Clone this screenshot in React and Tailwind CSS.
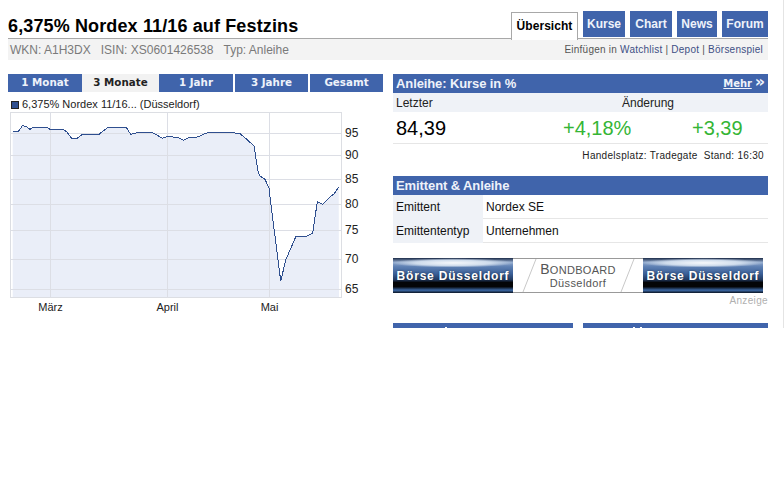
// App.jsx - Anleihe Übersicht
const SANS = 'font-["Liberation_Sans",Arial,sans-serif]';

const TABS = [
  { label: 'Kurse', width: 'w-[42px]' },
  { label: 'Chart', width: 'w-[42px]' },
  { label: 'News', width: 'w-[40px]' },
  { label: 'Forum', width: 'w-[46px]' },
];

// Kurve in Pixeln des Charts
const CURVE = [
  [38, 62], [55, 62], [68, 43], [80, 48], [90, 55], [100, 48], [140, 48], [150, 55], [188, 55], [200, 62],
  [215, 82], [232, 82], [247, 70], [297, 70], [325, 48], [378, 48], [392, 70], [415, 64], [455, 64], [488, 82],
  [502, 76], [535, 80], [550, 88], [568, 79], [590, 79], [625, 64], [688, 64], [720, 68], [740, 85], [762, 105],
  [775, 185], [780, 195], [795, 205], [807, 232], [815, 300], [825, 375], [842, 510], [858, 445], [888, 376],
  [920, 376], [938, 367], [952, 272], [968, 280], [990, 258], [1003, 248], [1016, 228],
].map(([x, y]) => [x / 3, y / 3]);

const Y_GRID = [
  { label: '95', y: 22 },
  { label: '90', y: 44 },
  { label: '85', y: 68 },
  { label: '80', y: 93 },
  { label: '75', y: 119 },
  { label: '70', y: 148 },
  { label: '65', y: 178 },
];

const X_GRID = [
  { label: 'März', x: 50 },
  { label: 'April', x: 167 },
  { label: 'Mai', x: 269 },
];

function Chart() {
  const line = CURVE.map(([x, y]) => `${x.toFixed(1)},${y.toFixed(1)}`).join(' ');
  const area = `12.7,186.5 ${line} 339,186.5`;
  const font = { fontFamily: '"Liberation Sans", Arial, sans-serif' };

  return (
    <svg width="360" height="206" viewBox="0 0 360 206" className="block -ml-2">
      <polygon points={area} fill="#eaeef8" />
      <rect x="10.5" y="1.5" width="331" height="185" fill="none" stroke="#dcdee3" strokeWidth="1" />
      {Y_GRID.map(g => (
        <g key={g.label}>
          <line x1="10" x2="342" y1={g.y + 0.5} y2={g.y + 0.5} stroke="#dcdee5" />
          <text x="345" y={g.y + 4} fontSize="12" fill="#222" style={font}>{g.label}</text>
        </g>
      ))}
      {X_GRID.map(g => (
        <g key={g.label}>
          <line x1={g.x + 0.5} x2={g.x + 0.5} y1="1" y2="187" stroke="#dcdee5" />
          <text x={g.x + 0.5} y="200" fontSize="11" fill="#222" textAnchor="middle" style={font}>{g.label}</text>
        </g>
      ))}
      <polyline points={line} fill="none" stroke="#2f4f8f" strokeWidth="1" shapeRendering="crispEdges" />
    </svg>
  );
}

function BoerseBanner() {
  return (
    <div className="w-[120px] h-[35px] pt-[1px] flex items-center justify-center bg-[radial-gradient(ellipse_52%_13%_at_50%_14%,#f6f8fb_0%,#cfdcec_60%,transparent_100%),linear-gradient(180deg,#1c2b47_0%,#8fa8cc_12%,#5e80b3_25%,#3b6098_45%,#223a60_62%,#040507_70%,#040507_82%,#3c68a5_92%,#0a1422_100%)]">
      <span className={`${SANS} text-[12px] leading-none font-bold text-white tracking-[0.8px] [text-shadow:0_0_2px_#00000080]`}>
        Börse Düsseldorf
      </span>
    </div>
  );
}

function SectionHead({ children }) {
  return (
    <div className="h-[19px] bg-[#4064ab] pl-[3px] flex items-center justify-between text-[13px] tracking-[-0.1px] font-bold text-[#eef2fa]">
      {children}
    </div>
  );
}

function App() {
  return (
    <div className={`${SANS} w-[784px] h-[328px] overflow-hidden bg-white border-r border-[#e4e4e4] text-black`}>
      <div className="pl-2 pr-[15px]">
        {/* Titel und Reiter */}
        <div className="h-[39px] flex items-end justify-between border-b-[1.5px] border-[#a8a8a8]">
          <h1 className="text-[18px] leading-[22px] font-bold mb-[1px] tracking-[0.13px]">6,375% Nordex 11/16 auf Festzins</h1>
          <div className="flex items-end gap-[5px] text-[12px] font-bold">
            <div className="w-[67px] h-[28px] -mb-[1.5px] bg-white border-[1.5px] border-b-0 border-[#a8a8a8] flex items-center justify-center tracking-[0.05px]">
              Übersicht
            </div>
            {TABS.map(tab => (
              <div key={tab.label} className={`${tab.width} h-[26px] mb-px bg-[#4064ab] text-[#eef2fa] flex items-center justify-center`}>
                {tab.label}
              </div>
            ))}
          </div>
        </div>

        <div className="h-[21px] bg-[#f3f3f3] pl-[2px] pr-[5px] flex items-center justify-between">
          <div className="flex gap-[10px] text-[12px] text-[#7a7a7a]">
            <span>WKN: A1H3DX</span>
            <span>ISIN: XS0601426538</span>
            <span>Typ: Anleihe</span>
          </div>
          <div className="text-[10px] text-[#555] tracking-[0.24px]">
            Einfügen in <span className="text-[#3d4f84]">Watchlist</span> | <span className="text-[#3d4f84]">Depot</span> | <span className="text-[#3d4f84]">Börsenspiel</span>
          </div>
        </div>

        <div className="mt-[14px] flex gap-[10px]">
          {/* Linke Spalte */}
          <div className="w-[375px]">
            <div className="h-[18px] flex text-[10.3px] font-['DejaVu_Sans',Verdana,sans-serif] font-bold text-[#eef2fa]">
              <div className="w-[74px] bg-[#4064ab] flex items-center justify-center">1 Monat</div>
              <div className="w-[77px] bg-[#f2f2f2] text-[#222] flex items-center justify-center">3 Monate</div>
              <div className="w-[74px] bg-[#4064ab] flex items-center justify-center">1 Jahr</div>
              <div className="w-[73px] ml-[2px] bg-[#4064ab] flex items-center justify-center">3 Jahre</div>
              <div className="w-[73px] ml-[2px] bg-[#4064ab] flex items-center justify-center">Gesamt</div>
            </div>
            <div className="h-[19px] pt-[6px] pl-[3px] flex items-center gap-[3px] text-[11px] text-[#222]">
              <span className="w-[8px] h-[8px] bg-[#2f4f8f] border border-[#222]" />
              6,375% Nordex 11/16... (Düsseldorf)
            </div>
            <Chart />
          </div>

          {/* Rechte Spalte */}
          <div className="w-[375px]">
            <SectionHead>
              <span>Anleihe: Kurse in %</span>
              <span className="pr-[3px] flex items-center gap-[3px] font-['DejaVu_Sans',Verdana,sans-serif] text-[10px]">
                <span className="underline">Mehr</span>
                <span className="text-[16px] leading-none -mt-[3px]">»</span>
              </span>
            </SectionHead>
            <div className="h-[19px] bg-[#eff2f7] pl-[3px] flex items-center text-[12px] text-[#222]">
              <span className="w-[226px]">Letzter</span>
              <span>Änderung</span>
            </div>
            <div className="h-[32px] pl-[3px] flex items-center text-[20px] border-b border-[#e6e6e6]">
              <span className="w-[167px]">84,39</span>
              <span className="w-[129px] text-[#35b535]">+4,18%</span>
              <span className="text-[#35b535]">+3,39</span>
            </div>
            <div className="h-[22px] pr-[4px] flex items-center justify-end gap-[6px] text-[10px] text-[#222] tracking-[0.3px]">
              <span>Handelsplatz: Tradegate</span>
              <span>Stand: 16:30</span>
            </div>

            <div className="mt-[10px]">
              <SectionHead>Emittent &amp; Anleihe</SectionHead>
              <div className="flex h-[24px] text-[12px] text-[#111]">
                <div className="w-[90px] bg-[#eff2f7] pl-[3px] flex items-center">Emittent</div>
                <div className="flex-1 pl-[3px] flex items-center border-b border-[#e6e6e6]">Nordex SE</div>
              </div>
              <div className="flex h-[24px] text-[12px] text-[#111]">
                <div className="w-[90px] bg-[#eff2f7] pl-[3px] flex items-center">Emittententyp</div>
                <div className="flex-1 pl-[3px] flex items-center border-b border-[#e6e6e6]">Unternehmen</div>
              </div>
            </div>

            {/* Werbebanner */}
            <div className="mt-[15px] flex h-[35px]">
              <BoerseBanner />
              <div className="relative w-[130px] bg-white border-y border-[#999] flex flex-col items-center justify-center text-[#555]">
                <svg width="130" height="33" viewBox="0 0 130 33" className="absolute left-0 top-0">
                  <line x1="10" y1="33" x2="23" y2="0" stroke="#c8c8c8" />
                  <line x1="108" y1="33" x2="121" y2="0" stroke="#c8c8c8" />
                </svg>
                <span className="leading-[13px] text-[11px] tracking-[0.3px]"><span className="text-[14px]">B</span>ONDBOARD</span>
                <span className="leading-[12px] text-[11px] tracking-[0.4px]">Düsseldorf</span>
              </div>
              <BoerseBanner />
            </div>
            <div className="h-[15px] pt-[1px] text-right text-[10px] leading-[14px] text-[#b0b0b0] tracking-[0.35px]">Anzeige</div>

            {/* Untere Kästen, vom Bildrand abgeschnitten */}
            <div className="mt-[15px] flex gap-[10px]">
              <div className="w-[180px] h-[5px] bg-[#4064ab] pl-[52px]">
                <div className="w-[2px] h-px mt-[4px] bg-white" />
              </div>
              <div className="w-[185px] h-[5px] bg-[#4064ab] pl-[50px] flex gap-[5px]">
                <div className="w-[2px] h-px mt-[4px] bg-white" />
                <div className="w-[2px] h-px mt-[4px] bg-white" />
              </div>
            </div>
          </div>
        </div>
      </div>
    </div>
  );
}

export default App;
